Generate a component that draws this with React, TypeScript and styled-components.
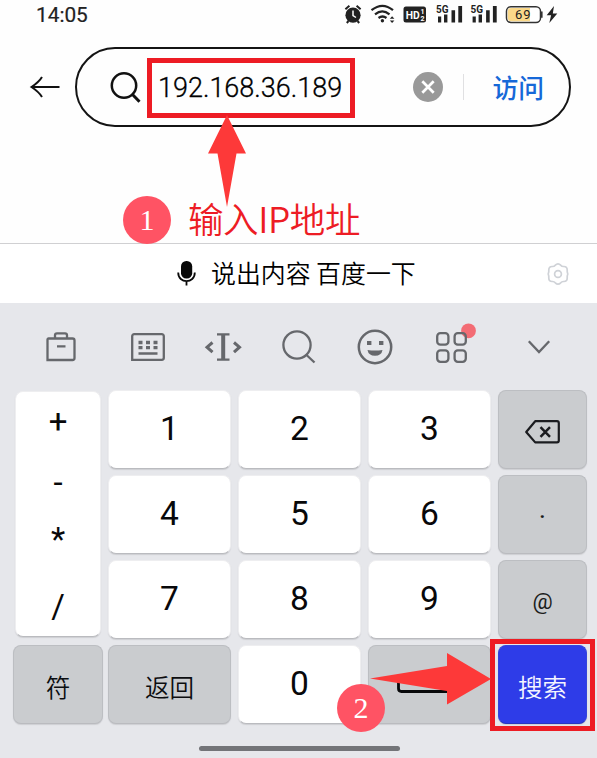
import React from 'react';
import styled, { createGlobalStyle } from 'styled-components';

const GlobalStyle = createGlobalStyle`
  *, *::before, *::after { box-sizing: border-box; }
  body { margin: 0; background: #fefefe; }
`;

const sans = `Roboto, "Noto Sans CJK SC", sans-serif`;
const cjk = `"Noto Sans CJK SC", sans-serif`;

const Screen = styled.div`
  position: relative;
  display: flex;
  flex-direction: column;
  width: 597px;
  height: 758px;
  overflow: hidden;
  background: #fefefe;
  color: #0c0c0e;
  font-family: ${sans};
`;

const StatusBar = styled.header`
  display: flex;
  align-items: center;
  justify-content: space-between;
  height: 30px;
  padding: 0 38px 0 36px;
`;

const Clock = styled.time`
  font-size: 20.8px;
  line-height: 30px;
  color: #222;
  -webkit-text-stroke: 0.2px #222;
`;

const StatusIcons = styled.svg`
  display: block;
  width: 217px;
  height: 30px;
`;

const SearchRow = styled.div`
  display: flex;
  align-items: center;
  height: 80px;
  margin-top: 17px;
  padding: 0 26px 0 30px;
`;

const Icon = styled.svg`
  display: block;
  flex: none;
  overflow: visible;
`;

const Pill = styled.div`
  display: flex;
  align-items: center;
  flex: 1;
  height: 80px;
  margin-left: 14px;
  padding: 0 25px 0 32px;
  border: 2px solid #141414;
  border-radius: 40px;
`;

const Address = styled.span`
  flex: 1;
  margin-left: 17px;
  padding-top: 2px;
  font-size: 27px;
  font-weight: 300;
  line-height: 40px;
  color: #000;
  -webkit-text-stroke: 0.3px #000;
`;

const Divider = styled.i`
  width: 1px;
  height: 26px;
  margin: 0 28px 0 20px;
  background: #e0e0e2;
`;

const Visit = styled.span`
  padding-bottom: 1px;
  font: 500 25.8px/38px ${cjk};
  color: #1668d8;
`;

const VoiceBar = styled.div`
  display: flex;
  align-items: center;
  height: 60px;
  margin-top: 116px;
  padding: 0 28px 0 177px;
  border-top: 1px solid #d0d0d2;
  background: #fff;
`;

const VoiceText = styled.span`
  flex: 1;
  margin-left: 15px;
  padding-bottom: 3px;
  font: 350 24.9px/36px ${cjk};
  color: #000;
`;

const Keyboard = styled.section`
  flex: 1;
  display: flex;
  flex-direction: column;
  background: #e6e7eb;
`;

const Tools = styled.nav`
  display: grid;
  grid-template-columns: 122px 52px 98px 54px 98px 54px 121px;
  align-items: center;
  justify-items: center;
  height: 86px;
  padding-top: 2px;
  color: #66686c;
`;

const Keys = styled.div`
  display: grid;
  grid-template-columns: 90px 123px 123px 123px 89px;
  grid-template-rows: repeat(4, 79px);
  gap: 6px 7px;
  padding: 1px 0 0 11px;
`;

const Key = styled.button<{ $tone?: 'white' | 'grey' | 'blue'; $shift?: boolean }>`
  display: flex;
  align-items: center;
  justify-content: center;
  height: 79px;
  margin: ${p => (p.$shift ? '0 -2px 0 2px' : '0')};
  padding: 0 0 2px;
  border: 1px solid ${p => (p.$tone === 'grey' ? '#bcbec2' : p.$tone === 'blue' ? '#3544dc' : '#eeeef0')};
  border-bottom-color: ${p => (p.$tone === 'blue' ? '#2836be' : '#babbbf')};
  border-radius: 8px;
  background: ${p => (p.$tone === 'grey' ? '#cacccf' : p.$tone === 'blue' ? '#2e3ce8' : '#fff')};
  box-shadow: 0 1px 1px rgba(80, 80, 90, 0.16);
  color: #08080a;
  font: 400 33.5px/40px ${sans};
`;

const KeyWord = styled.span<{ $light?: boolean }>`
  padding-top: 5px;
  font: 350 24.6px/36px ${cjk};
  color: ${p => (p.$light ? '#f4f5ff' : '#0c0d10')};
`;

const KeyMark = styled.span<{ $raised?: boolean }>`
  padding: ${p => (p.$raised ? '0 0 7px' : '4px 0 0')};
  font: ${p => (p.$raised ? 500 : 400)} 22.5px/30px ${sans};
  color: #1b1c20;
`;

const SymbolKey = styled.div`
  grid-row: span 3;
  display: grid;
  grid-template-rows: 60px 60px 62px 1fr;
  justify-items: center;
  align-items: center;
  height: 246px;
  margin: 1px 0 0 4px;
  border: 1px solid #eeeef0;
  border-bottom-color: #babbbf;
  border-radius: 8px;
  background: #fff;
  box-shadow: 0 1px 1px rgba(80, 80, 90, 0.16);
`;

const Glyph = styled.span<{ $down?: number; $up?: number }>`
  padding: ${p => p.$down ?? 0}px 0 ${p => p.$up ?? 0}px;
  font: 400 33px/38px ${sans};
  color: #08080a;
`;

const Lower = styled.span<{ $by: number }>`
  padding-top: ${p => p.$by}px;
`;

const HomeBar = styled.i`
  width: 201px;
  height: 5px;
  margin: 22px 0 0 199px;
  border-radius: 3px;
  background: #737478;
`;

const Highlight = styled.div<{ $box: [number, number, number, number] }>`
  position: absolute;
  left: ${p => p.$box[0]}px;
  top: ${p => p.$box[1]}px;
  width: ${p => p.$box[2]}px;
  height: ${p => p.$box[3]}px;
  border: 5px solid #ed1c24;
`;

const Step = styled.div<{ $x: number; $y: number }>`
  position: absolute;
  left: ${p => p.$x}px;
  top: ${p => p.$y}px;
  width: 48px;
  height: 48px;
  border-radius: 50%;
  background: #ff5364;
  color: #fff;
  font: 400 30px/47px "Liberation Serif", serif;
  text-align: center;
`;

const Caption = styled.div`
  position: absolute;
  left: 188px;
  top: 192px;
  font: 350 35.5px/52px ${cjk};
  letter-spacing: -0.4px;
  white-space: nowrap;
  color: #ed1c24;
`;

const Arrow = styled.svg<{ $x: number; $y: number }>`
  position: absolute;
  left: ${p => p.$x}px;
  top: ${p => p.$y}px;
  fill: #fd3939;
`;

const Status = () => (
  <StatusIcons viewBox="342 0 217 30" fill="#222">
    {/* alarm */}
    <circle cx="353" cy="15.2" r="7.6" />
    <path d="M345.4 9.2l4-3.5M360.6 9.2l-4-3.5M348.5 21l-1.7 2M357.5 21l1.7 2" stroke="#222" strokeWidth="2" />
    <path d="M353 10.5v5l3 2" stroke="#fff" strokeWidth="1.5" fill="none" />
    {/* wifi */}
    <g fill="none" stroke="#222" strokeWidth="2.2">
      <path d="M371.5 10.2q11-8.8 21.5 0M375 14.3q7.3-6 14.5 0M378.5 18q4-3 8 0" />
    </g>
    <circle cx="382.4" cy="20.7" r="1.7" />
    <path d="M389.8 18.8l2.3-2.6 2.3 2.6zM389.8 20.4l2.3 2.6 2.3-2.6z" />
    {/* HD badge */}
    <rect x="403.5" y="6.5" width="22.5" height="16" rx="2.5" />
    <g fill="#fff" fontFamily="Roboto, sans-serif" fontWeight="700">
      <text x="405.8" y="18.8" fontSize="11.5" textLength="14" lengthAdjust="spacingAndGlyphs">HD</text>
      <text x="420.5" y="13.7" fontSize="7">1</text>
      <text x="420.5" y="20.5" fontSize="7">2</text>
    </g>
    {/* cellular */}
    {[0, 34.6].map(dx => (
      <g key={dx} transform={`translate(${dx} 0)`}>
        <text x="436" y="12.6" fontSize="10.5" fontFamily="Roboto, sans-serif" fontWeight="700" textLength="12.5" lengthAdjust="spacingAndGlyphs">5G</text>
        <path d="M438 16.5h3.2v6H438zM444 14.5h3.4v8H444zM451.5 10.3h3.6v12.2h-3.6zM458.3 6h3.8v16.5h-3.8z" />
      </g>
    ))}
    {/* battery */}
    <rect x="506.5" y="6.7" width="34" height="15.8" rx="4.5" fill="#fff" stroke="#333" strokeWidth="1.5" />
    <path d="M511 8h19v13.2h-19a3.2 3.2 0 0 1-3.2-3.2v-6.8A3.2 3.2 0 0 1 511 8z" fill="#fbd98a" />
    <path d="M541.8 11.5v6.2" stroke="#333" strokeWidth="1.6" />
    <text x="515" y="19.2" fontSize="13" fontFamily="Roboto, sans-serif" textLength="15.5">69</text>
    <path d="M554 6l-7.3 9.3h4.4L549.3 23l8-9.5h-4.5z" />
  </StatusIcons>
);

const Backspace = () => (
  <Icon width="36" height="24" viewBox="0 0 36 24" fill="none" stroke="#1b1c20" strokeWidth="2.2">
    <path d="M10.2 1.2H32a1.8 1.8 0 0 1 1.8 1.8v17.6a1.8 1.8 0 0 1-1.8 1.8H10.2L1.2 12z" strokeLinejoin="round" />
    <path d="M15.5 7.2l9.5 9.6M25 7.2l-9.5 9.6" strokeWidth="2.5" />
  </Icon>
);

const stroke = { fill: 'none', stroke: 'currentColor', strokeWidth: 2.3 };

export default function App() {
  return (
    <>
      <GlobalStyle />
      <Screen>
        <StatusBar>
          <Clock>14:05</Clock>
          <Status />
        </StatusBar>

        <SearchRow>
          <Icon width="31" height="22" viewBox="0 0 31 22" fill="none" stroke="#111" strokeWidth="2">
            <path d="M29.5 11H2M12 1Q9 6 1.5 11 9 16 12 21" />
          </Icon>
          <Pill>
            <Icon width="32" height="32" viewBox="0 0 32 32" fill="none" stroke="#111" strokeWidth="2.5">
              <circle cx="15" cy="14.5" r="12.2" />
              <path d="M23.5 23.5l7 7.2" strokeWidth="3" />
            </Icon>
            <Address>192.168.36.189</Address>
            <Icon width="30" height="30" viewBox="0 0 30 30">
              <circle cx="15" cy="15" r="15" fill="#999" />
              <path d="M9.3 9.3l11.4 11.4M20.7 9.3L9.3 20.700" stroke="#fff" strokeWidth="2.7" />
            </Icon>
            <Divider />
            <Visit>访问</Visit>
          </Pill>
        </SearchRow>

        <VoiceBar>
          <Icon width="19" height="25" viewBox="0 0 19 25">
            <rect x="4" y="0" width="11.2" height="17.5" rx="5.3" fill="#090909" />
            <path d="M1.2 11.5c0 11.6 16.6 11.6 16.6 0M9.5 20v4.5" fill="none" stroke="#090909" strokeWidth="1.8" />
          </Icon>
          <VoiceText>说出内容 百度一下</VoiceText>
          <Icon width="22" height="22" viewBox="0 0 22 22" fill="none" stroke="#cfd2d7" strokeWidth="1.7" strokeLinejoin="round">
            <path d="M8.3 2.2Q11-.6 13.7 2.2 14.8 3.6 16.6 3.500 20.300 3.300 20.200 7 20 9 20.800 11 20 13 20.200 15 20.300 18.700 16.600 18.500 14.800 18.400 13.700 19.800 11 22.600 8.300 19.800 7.200 18.400 5.400 18.500 1.700 18.700 1.800 15 2 13 1.200 11 2 9 1.800 7 1.700 3.300 5.400 3.500 7.200 3.600 8.300 2.200z" />
            <circle cx="11" cy="11" r="3.4" />
          </Icon>
        </VoiceBar>

        <Keyboard>
          <Tools>
            <Icon width="30" height="30" viewBox="0 0 30 30" {...stroke}>
              <path d="M1.5 7.5a1 1 0 0 1 1-1h24a2 2 0 0 1 2 2v17.5a2 2 0 0 1-2 2h-25zM9 6V3.2Q9 1.3 11 1.3h8q2 0 2 1.900V6M11 14.400h8.500" />
            </Icon>
            <Icon width="34" height="28" viewBox="0 0 34 28" {...stroke}>
              <path d="M1.2 3.2a2 2 0 0 1 2-2h27.600a2 2 0 0 1 2 2v21.600a2 2 0 0 1-2 2H1.200zM7.500 20.500h19" />
              <path d="M7.500 9.500h19M7.500 14.600h19" strokeWidth="3.4" strokeDasharray="4 3.5" />
            </Icon>
            <Icon width="36" height="28" viewBox="0 0 36 28" {...stroke}>
              <path d="M12 1.400h12.500M12 26.600h12.500" />
              <path d="M18.200 1.400v25.200" strokeWidth="4" />
              <path d="M7.500 9.500L2 14.200l5.500 5M29 9.500l5.500 4.700-5.500 5" strokeWidth="3" />
            </Icon>
            <Icon width="34" height="34" viewBox="0 0 34 34" {...stroke}>
              <circle cx="15" cy="15" r="13.6" />
              <path d="M24 24.500l8.500 8" />
            </Icon>
            <Icon width="36" height="36" viewBox="0 0 36 36" {...stroke}>
              <circle cx="18" cy="18" r="16.2" strokeWidth="2.5" />
              <path d="M10.500 21q7.500 1.200 15 0-1 5.800-7.500 5.800t-7.500-5.800z" fill="currentColor" stroke="none" />
              <path d="M10 12h4.400v4H10zM22 12h4.400v4H22z" fill="currentColor" stroke="none" />
            </Icon>
            <Icon width="31" height="31" viewBox="0 0 31 31" {...stroke}>
              <circle cx="32.5" cy="-1.2" r="7.4" fill="#f36c74" stroke="none" />
              <rect x="1.2" y="1.2" width="11.2" height="11.4" rx="3.2" />
              <rect x="18.6" y="1.2" width="11.2" height="11.4" rx="3.2" />
              <rect x="1.2" y="18.4" width="11.2" height="11.4" rx="3.2" />
              <rect x="18.6" y="18.4" width="11.2" height="11.4" rx="3.2" />
            </Icon>
            <Icon width="22" height="14" viewBox="0 0 22 14" {...stroke}>
              <path d="M.8 1.200L11 12 21.200 1.200" />
            </Icon>
          </Tools>

          <Keys>
            <SymbolKey>
              <Glyph>+</Glyph>
              <Glyph $down={2}>-</Glyph>
              <Glyph $up={7}>*</Glyph>
              <Glyph $down={3}>/</Glyph>
            </SymbolKey>
            <Key>1</Key>
            <Key>2</Key>
            <Key>3</Key>
            <Key $tone="grey" aria-label="backspace"><Lower $by={7}><Backspace /></Lower></Key>
            <Key>4</Key>
            <Key>5</Key>
            <Key>6</Key>
            <Key $tone="grey"><KeyMark $raised>.</KeyMark></Key>
            <Key>7</Key>
            <Key>8</Key>
            <Key>9</Key>
            <Key $tone="grey"><KeyMark>@</KeyMark></Key>
            <Key $tone="grey" $shift><KeyWord>符</KeyWord></Key>
            <Key $tone="grey"><KeyWord>返回</KeyWord></Key>
            <Key>0</Key>
            <Key $tone="grey" aria-label="space">
              <Lower $by={2}>
                <Icon width="65" height="16" viewBox="0 0 65 16" fill="none" stroke="#08080a" strokeWidth="2.8">
                  <path d="M1.500 0v11.500q0 3 3 3h56q3 0 3-3V0" />
                </Icon>
              </Lower>
            </Key>
            <Key $tone="blue"><KeyWord $light>搜索</KeyWord></Key>
          </Keys>
          <HomeBar />
        </Keyboard>

        <Highlight $box={[147, 58, 208, 60]} />
        <Highlight $box={[490, 639, 105, 92]} />
        <Caption>输入IP地址</Caption>
        <Arrow $x={208} $y={115} width="38" height="92" viewBox="0 0 38 92">
          <path d="M19 0l19 38.500H28.500L19 92 9.500 38.500H0z" />
        </Arrow>
        <Arrow $x={370} $y={653} width="121" height="52" viewBox="0 0 121 52">
          <path d="M0 25.500L77 13V0l44 26-44 25.500V38z" />
        </Arrow>
        <Step $x={123} $y={196}>1</Step>
        <Step $x={337} $y={684}>2</Step>
      </Screen>
    </>
  );
}
